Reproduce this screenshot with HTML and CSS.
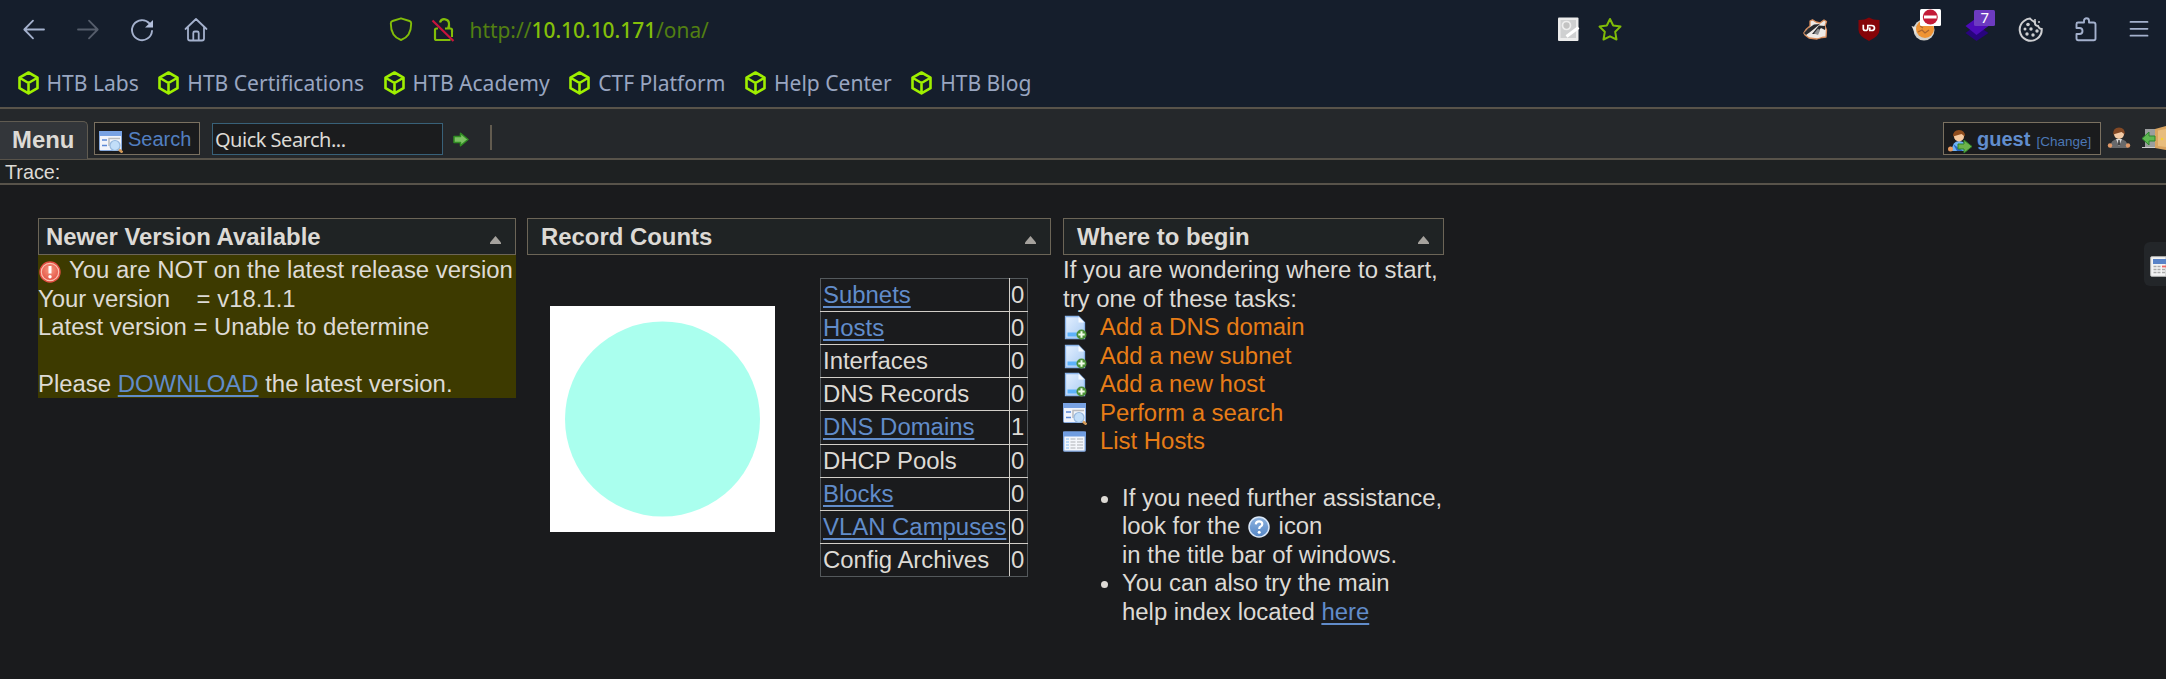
FILE: index.html
```html
<!DOCTYPE html>
<html lang="en">
<head>
<meta charset="utf-8">
<title>OpenNetAdmin</title>
<link rel="stylesheet" href="styles.css">
</head>
<body>
<svg class="defs" width="0" height="0">
  <defs>
    <linearGradient id="paper" x1="0" y1="0" x2="1" y2="1"><stop offset="0" stop-color="#e4f0ff"/><stop offset="1" stop-color="#a9cbf3"/></linearGradient>
    <radialGradient id="red" cx=".5" cy=".4" r=".6"><stop offset="0" stop-color="#f89a82"/><stop offset="1" stop-color="#e0483c"/></radialGradient>
    <linearGradient id="blue" x1="0" y1="0" x2="0" y2="1"><stop offset="0" stop-color="#8fb4e0"/><stop offset="1" stop-color="#5486c6"/></linearGradient>
    <symbol id="cube" viewBox="0 0 21 24"><path d="M10.5 1.5 19.5 6.6v10.6L10.5 22.4 1.5 17.2V6.6ZM2 7l8.500 5L19 7M10.500 12v10" fill="none" stroke="#9fef00" stroke-width="2.600" stroke-linejoin="round"/></symbol>
    <symbol id="search" viewBox="0 0 24 22"><rect x=".5" y=".5" width="22" height="19" rx="1" fill="#f1f4fb" stroke="#86a9de"/><path d="M0 0h23v5H0z" fill="#78a2e3"/><path d="M3 9h5M3 14.500h5" stroke="#5b88d6" stroke-width="1.600"/><path d="M10 15V7.500h11" stroke="#b9babd" stroke-width="1.500" fill="none"/><circle cx="16" cy="14.500" r="5" fill="#c2def9" stroke="#97b9df" stroke-width="1.200"/><path d="m20 18.500 3.500 3" stroke="#d49a58" stroke-width="2.600"/></symbol>
    <symbol id="page-add" viewBox="0 0 24 25"><path d="M2.500 1.500h13l6 6v16h-19z" fill="url(#paper)" stroke="#8bb5ea" stroke-width="1.300"/><path d="m15.500 1.500 6 6h-6z" fill="#f5faff"/><path d="M4.500 17.500h10v4h-10z" fill="#5db2fb"/><circle cx="18.500" cy="19.500" r="5" fill="#4c9138"/><path d="M18.500 16.300v6.400M15.300 19.500h6.400" stroke="#f0fbe8" stroke-width="2"/></symbol>
    <symbol id="list" viewBox="0 0 24 21"><rect x=".7" y=".7" width="21.500" height="19" rx="1" fill="#f4f7fc" stroke="#7ca3dc" stroke-width="1.300"/><path d="M0 0h23v5H0z" fill="#709de0"/><path d="M3 7.500h3M3 10.500h3M3 13.500h3M3 16.500h3" stroke="#83bdf4" stroke-width="1.200"/><path d="M7.500 7.500h5M14 7.500h6M7.500 10.500h5M14 10.500h6M7.500 13.500h5M14 13.500h6M7.500 16.500h5M14 16.500h6" stroke="#aeb2b6" stroke-width="1.200"/></symbol>
    <symbol id="up" viewBox="0 0 11 8"><path d="M5.500 0 11 6.500V8H0V6.500Z" fill="#a5a29d"/></symbol>
  </defs>
</svg>

<header class="browser">
  <nav class="address">
    <svg class="ico back" viewBox="0 0 24 24"><path d="M22 12.500H2.500M11 3.700 2.300 12.500l8.700 8.800" fill="none" stroke="#a4b1cd" stroke-width="1.800" stroke-linecap="round" stroke-linejoin="round"/></svg>
    <svg class="ico forward" viewBox="0 0 24 24"><path d="M2 12.500h19.500M13 3.700l8.700 8.800-8.700 8.800" fill="none" stroke="#555d6b" stroke-width="1.800" stroke-linecap="round" stroke-linejoin="round"/></svg>
    <svg class="ico reload" viewBox="0 0 24 24"><path d="M19.500 6.500A10 10 0 1 0 22 14" fill="none" stroke="#a4b1cd" stroke-width="1.900" stroke-linecap="round"/><path d="M23 3v7.500h-8Z" fill="#b3bfdb"/></svg>
    <svg class="ico home" viewBox="0 0 24 24"><path d="M1.500 12 12 2l10.500 10M4 10v11.500q0 2 2 2h12q2 0 2-2V10M9.300 23v-7q0-1.500 1.500-1.500h2.400q1.500 0 1.500 1.500v7" fill="none" stroke="#a4b1cd" stroke-width="1.800" stroke-linecap="round" stroke-linejoin="round"/></svg>
    <svg class="ico shield" viewBox="0 0 24 24"><path d="M12 1.300 20.500 4q1.700.6 1.700 2.400C22.200 14 19 20.500 12 23 5 20.500 1.800 14 1.800 6.400 1.800 4.600 2 4.500 3.500 4Z" fill="none" stroke="#82bd09" stroke-width="1.900" stroke-linejoin="round"/></svg>
    <svg class="ico lock" viewBox="0 0 24 24"><path d="M9 5.500a4.600 4.600 0 0 1 9 1.500V12M14 11.500h5.500q1.500 0 1.500 1.500v2M4 13v8.500Q4 23 5.500 23h14M4 13q0-1.500 1.500-1.500H7" fill="none" stroke="#82bd09" stroke-width="2.200"/><path d="m18 8-1 3.500M21 15v5" stroke="#82bd09" stroke-width="2"/><path d="M1.500 3.500 22.500 24" stroke="#c9143c" stroke-width="2.200"/></svg>
    <span class="url">http://<b>10.10.10.171</b>/ona/</span>
    <div class="page-actions">
      <svg class="ico" viewBox="0 0 24 24"><rect x="1" y=".5" width="20.500" height="23.500" rx="1" fill="#ececec"/><rect x="3.500" y="3" width="15.500" height="18" fill="#cfd0d1"/><circle cx="9.500" cy="8.500" r="4" fill="#c3c3c3" stroke="#eee" stroke-width="1.700"/><path d="M9.500 19.500 21.500 10.500" stroke="#fff" stroke-width="3"/></svg>
      <svg class="ico star" viewBox="0 0 24 24"><path d="m12 2 3.200 6.500 7.300 1.100-5.300 5.200 1.300 7.700L12 19.300l-6.500 3.200 1.300-7.700L1.500 9.600l7.300-1.100Z" fill="none" stroke="#80bb08" stroke-width="2" stroke-linejoin="round"/></svg>
    </div>
    <div class="extensions">
      <svg class="ico" viewBox="0 0 24 24"><path d="M.8 16 3 12.500 7 9V4l2.500-1.200L13 5l4 1 4-3 2.500 1.500L22 9l1.500 4-.5 7-4 .5-5 1.500-8-1-4-3Z" fill="#eeeae6" stroke="#d98d5b" stroke-width="1.300" stroke-linejoin="round"/><path d="m1 16 4-4.500 6-4 6-.5-6 5-4.500 3.500L3 18ZM9 17l7-8.500 6 .5v4l-4-2-5 6Z" fill="#282a2e"/><path d="m11 16.500 4-5 2 2-2 4.500Z" fill="#8f9092"/></svg>
      <svg class="ico" viewBox="0 0 24 24"><path d="M12 .5Q16 3 22.500 3v10q0 6-10.500 11Q1.500 19 1.500 13V3Q8 3 12 .5Z" fill="#850408"/><path d="M6.300 7.700v3.800q0 2 2.200 2t2.300-2V7.700M11 8.500h3.500q3 0 3 2.500t-3 2.500h-1.700v-3" stroke="#fff" stroke-width="1.700" fill="none"/></svg>
      <svg class="ico" viewBox="0 0 24 24"><circle cx="13" cy="13" r="10.500" fill="#d2d0cb"/><path d="m.5 9 7 2-3 6Z" fill="#e9e4db"/><circle cx="14" cy="12" r="9" fill="#ef9434"/><path d="m7 15 4-2 3 3 4-3M9 9l3 2" stroke="#ad6730" stroke-width="1.300" fill="none"/><rect x="9" y="-8" width="21" height="17" rx="1.500" fill="#fff"/><circle cx="19.300" cy="0" r="7.500" fill="#c31a37"/><path d="M13 0h12.600" stroke="#fff" stroke-width="3"/></svg>
      <svg class="ico" viewBox="0 0 24 24"><path d="m.5 16 11-8 12 8-12 8Z" fill="#28047d"/><path d="m.5 9 11-8 12 8-12 9Z" fill="#4d0bb8"/><rect x="9" y="-7" width="21" height="16" rx="1.500" fill="#6d3bc0"/><text x="15.500" y="6" font-family="Noto Sans, sans-serif" font-size="15" fill="#fff">7</text></svg>
      <svg class="ico" viewBox="0 0 24 24"><path d="M11 1.500Q8 1.500 5 4A11 11 0 1 0 22.700 12q-2.500 0-3.700-3-3.500-.5-3-4-3-1-5-3.500Z" fill="none" stroke="#cdced1" stroke-width="2"/><g fill="#cdced1"><circle cx="9" cy="7.500" r="1.800"/><circle cx="6" cy="12" r="1.500"/><circle cx="12" cy="12" r="1.700"/><circle cx="8" cy="17" r="1.700"/><circle cx="14" cy="18" r="1.700"/><circle cx="18" cy="14" r="1.700"/><circle cx="16" cy="3" r="1"/><circle cx="20" cy="5" r="1"/></g></svg>
      <svg class="ico" viewBox="0 0 24 24"><path d="M2.500 9V7q0-1.500 1.500-1.500h6V3.800a2.500 2.500 0 0 1 5 0v1.700h4.500q2 0 2 2v14q0 1.700-1.700 1.700H4.200q-1.700 0-1.700-1.700V17H5.500a3 3 0 0 0 0-6H2.500Z" fill="none" stroke="#a4b1cd" stroke-width="1.900" stroke-linejoin="round" transform="translate(1)"/></svg>
      <svg class="ico" viewBox="0 0 24 24"><path d="M3.500 4.900h17M3.500 11.800h17M3.500 18.700h17" stroke="#a4b1cd" stroke-width="1.800" stroke-linecap="round"/></svg>
    </div>
  </nav>
  <nav class="bookmarks">
    <span><svg><use href="#cube"/></svg>HTB Labs</span>
    <span><svg><use href="#cube"/></svg>HTB Certifications</span>
    <span><svg><use href="#cube"/></svg>HTB Academy</span>
    <span><svg><use href="#cube"/></svg>CTF Platform</span>
    <span><svg><use href="#cube"/></svg>Help Center</span>
    <span><svg><use href="#cube"/></svg>HTB Blog</span>
  </nav>
</header>

<div class="toolbar">
  <div class="menu">Menu</div>
  <div class="search"><svg class="search-ico"><use href="#search"/></svg>Search</div>
  <div class="quick">Quick Search...</div>
  <svg class="go" viewBox="0 0 16 15"><path d="M1 4.500h6.500V1.200L15 7.500l-7.500 6.300v-3.300H1Z" fill="#7cc063" stroke="#2f8c22" stroke-width="1.500" stroke-linejoin="round"/></svg>
  <i class="divider"></i>
  <div class="user">
    <svg class="user-ico" viewBox="0 0 24 23"><path d="M4 21q0-10 7-10 8 0 8 10Z" fill="#6eb2f4"/><path d="m5 14 4 7h6Z" fill="#2767c5"/><circle cx="2.500" cy="19" r="2.500" fill="#e79a60"/><circle cx="11" cy="6.500" r="5" fill="#f6c99f"/><path d="M5 6.500Q5 0 11 0t6 6.500L13.500 4Z" fill="#8f4c1d"/><path d="M10 14h6v-4l8 6.500-8 6.500v-4h-6Z" fill="#6db34b" stroke="#2c8428"/></svg>
    <b>guest</b><small>[Change]</small>
  </div>
  <svg class="suit" viewBox="0 0 22 22"><path d="M2 21q0-9 9-9t9 9Z" fill="#68696b"/><path d="m8 12 3 7 3-7Z" fill="#ddd"/><path d="M10.300 13h1.400l.5 5h-2.400Z" fill="#444"/><circle cx="2" cy="18.500" r="2.200" fill="#df9868"/><circle cx="20" cy="18.500" r="2.200" fill="#df9868"/><circle cx="11" cy="7" r="5" fill="#f4cba6"/><path d="M5 7.500Q5 .5 11 .5t6 7L13.500 5Z" fill="#824824"/></svg>
  <svg class="door" viewBox="0 0 24 24"><path d="M3 3h12v19H3Z" fill="#9b9e9e"/><path d="M0 21.500h15" stroke="#ccc"/><path d="m13 3 11-3v24l-11-2Z" fill="#d9a460"/><path d="M16 4.500 24 3v18l-8-1Z" fill="#e8bd7d"/><circle cx="20" cy="13" r="1.200" fill="#f7cf31"/><path d="M13 10H7V6L0 12.500 7 19v-4h6Z" fill="#5eb852" stroke="#2d872d"/></svg>
</div>
<div class="trace">Trace:</div>

<main class="desktop">
  <section class="widget version">
    <h2>Newer Version Available<svg><use href="#up"/></svg></h2>
    <div class="notice">
      <div><svg class="alert" viewBox="0 0 22 22"><circle cx="11" cy="11" r="10" fill="url(#red)" stroke="#e34d42" stroke-width="1.400"/><circle cx="11" cy="11" r="8.700" fill="none" stroke="#fbc0b0" stroke-width="1.200"/><path d="M11 5v7.500" stroke="#fff" stroke-width="3"/><circle cx="11" cy="15.800" r="1.700" fill="#fff"/></svg>You are NOT on the latest release version</div>
      <div>Your version &nbsp;&nbsp; = v18.1.1</div>
      <div>Latest version = Unable to determine</div>
      <div>&nbsp;</div>
      <div>Please <a>DOWNLOAD</a> the latest version.</div>
    </div>
  </section>

  <section class="widget counts">
    <h2>Record Counts<svg><use href="#up"/></svg></h2>
    <div class="counts-body">
      <svg class="pie" viewBox="0 0 225 226"><rect width="225" height="226" fill="#fff"/><circle cx="112.500" cy="113" r="97.500" fill="#aaffee"/></svg>
      <table>
        <tr><td><a>Subnets</a></td><td>0</td></tr>
        <tr><td><a>Hosts</a></td><td>0</td></tr>
        <tr><td>Interfaces</td><td>0</td></tr>
        <tr><td>DNS Records</td><td>0</td></tr>
        <tr><td><a>DNS Domains</a></td><td>1</td></tr>
        <tr><td>DHCP Pools</td><td>0</td></tr>
        <tr><td><a>Blocks</a></td><td>0</td></tr>
        <tr><td><a>VLAN Campuses</a></td><td>0</td></tr>
        <tr><td>Config Archives</td><td>0</td></tr>
      </table>
    </div>
  </section>

  <section class="widget begin">
    <h2>Where to begin<svg><use href="#up"/></svg></h2>
    <div>If you are wondering where to start,</div>
    <div>try one of these tasks:</div>
    <div class="task"><svg><use href="#page-add"/></svg>Add a DNS domain</div>
    <div class="task"><svg><use href="#page-add"/></svg>Add a new subnet</div>
    <div class="task"><svg><use href="#page-add"/></svg>Add a new host</div>
    <div class="task low"><svg><use href="#search"/></svg>Perform a search</div>
    <div class="task low"><svg><use href="#list"/></svg>List Hosts</div>
    <ul>
      <li>If you need further assistance,<br>look for the <svg class="help" viewBox="0 0 22 22"><circle cx="11" cy="11" r="10" fill="url(#blue)" stroke="#dbe8f8" stroke-width="1.500"/><path d="M7.800 8.300q.3-3 3.300-3t3.200 2.700q0 1.700-1.700 2.600-1.400.7-1.400 2.400" stroke="#fff" stroke-width="2.200" fill="none"/><circle cx="11.200" cy="16.200" r="1.500" fill="#fff"/></svg> icon<br>in the title bar of windows.</li>
      <li>You can also try the main<br>help index located <a>here</a></li>
    </ul>
  </section>

  <aside class="calc"><svg viewBox="0 0 16 21"><path d="M16 .7H1.500Q.7.700.7 1.500v18q0 .8.800.8H16Z" fill="#f4f4f4" stroke="#bcbcbc"/><path d="M3 3h13v5H3Z" fill="#5983c8"/><path d="M3.500 10.500h3M7.500 10.500h3M3.500 13.500h3M7.500 13.500h3M12 13.500h3M3.500 16.500h3M7.500 16.500h3M12 16.500h3" stroke="#aaa" stroke-width="1.600"/><path d="M12 10.500h4" stroke="#e66" stroke-width="1.800"/></svg></aside>
</main>
</body>
</html>
```

FILE: styles.css
```css
* { box-sizing: border-box; }
html, body { margin: 0; height: 100%; overflow: hidden; }
body {
  background: #1a1b1d;
  color: #dddad5;
  font: 23.92px/28.55px "Liberation Sans", Arial, sans-serif;
}
svg { display: block; flex: none; overflow: visible; }
.defs { position: absolute; }

.browser {
  height: 107px;
  background: #151e2c;
  font-family: "Noto Sans", sans-serif;
}
.address { display: flex; height: 58px; padding: 17px 0 0 22px; }
.ico { width: 24px; height: 24px; }
.forward { margin-left: 30px; }
.reload { margin-left: 30px; }
.home { margin-left: 29.5px; }
.shield { margin-left: 181.5px; }
.lock { margin-left: 17.5px; }
.url { width: 1087.5px; margin-left: 15px; color: #527f12; font-size: 20.9px; line-height: 26px; white-space: nowrap; }
.url b { color: #84c00a; font-weight: 500; }
.page-actions { display: flex; gap: 16.5px; width: 246px; }
.extensions { display: flex; gap: 30px; }
.bookmarks {
  display: flex;
  gap: 19.5px;
  padding-left: 17.5px;
  color: #99a6c1;
  font-size: 21.05px;
  line-height: 49px;
  white-space: nowrap;
}
.bookmarks span { display: flex; gap: 8px; }
.bookmarks svg { width: 21px; height: 24px; margin-top: 13px; }

.toolbar {
  display: flex;
  align-items: flex-start;
  height: 53px;
  border: solid #58534a;
  border-width: 2px 0;
  background: #25282b;
}
.menu {
  width: 88px;
  height: 38px;
  margin-top: 12px;
  padding-left: 12px;
  border: solid #605b51;
  border-width: 1px 1px 0 0;
  border-radius: 0 5px 0 0;
  background: #33363a;
  font-weight: bold;
  line-height: 36px;
}
.search, .user {
  display: flex;
  height: 33px;
  margin-top: 13px;
  border: 1px solid #7a7060;
  background: #1a1b1d;
  color: #527fc0;
}
.search { width: 106px; margin-left: 6px; padding-left: 4px; font-size: 20px; line-height: 33px; }
.search-ico { width: 24px; height: 22px; margin: 8px 5px 0 0; }
.quick {
  width: 231px;
  height: 32px;
  margin: 14px 0 0 12px;
  padding-left: 2px;
  border: 1px solid #386179;
  background: #1b1c1e;
  font: 20px/31px "Noto Sans", sans-serif;
  letter-spacing: -.5px;
}
.go { width: 16px; height: 15px; margin: 23px 0 0 10px; }
.divider { width: 2px; height: 25px; margin: 16px 0 0 21px; background: #625b4f; }
.user { width: 158px; margin-left: auto; padding-left: 4px; color: #618dcd; }
.user-ico { width: 24px; height: 23px; margin: 7px 5px 0 0; }
.user b { width: 59.5px; font-size: 20px; line-height: 32px; }
.user small { color: #4c77b5; font-size: 13.5px; line-height: 37px; }
.suit { width: 22px; height: 22px; margin: 18px 12px 0 7px; }
.door { width: 24px; height: 24px; margin-top: 17px; }
.trace {
  height: 25px;
  padding-left: 5px;
  border-bottom: 2px solid #58534a;
  background: #1e2122;
  font-size: 19.8px;
  line-height: 25px;
}

.desktop { display: flex; align-items: flex-start; padding: 33px 0 0 38px; }
.widget { flex: none; white-space: nowrap; }
.version { width: 478px; }
.counts { width: 524px; margin-left: 11px; }
.begin { width: 381px; margin-left: 12px; }
h2 {
  display: flex;
  justify-content: space-between;
  height: 37px;
  margin: 0 0 1px;
  padding: 0 14px 0 13px;
  border: 1px solid #6c6557;
  background: #1f2324;
  font-size: 23.92px;
  line-height: 35px;
}
.version h2 { margin: 0; padding-left: 7px; }
h2 svg { width: 11px; height: 8px; margin-top: 17px; }
.notice { height: 143px; padding-top: 1px; background: #3d3a00; }
.alert { display: inline-block; width: 22px; height: 22px; margin: 0 8px -5px 1px; vertical-align: baseline; }
.notice div { height: 28.55px; }
a { color: #618cca; }
.notice a, table a, li a { text-decoration: underline; text-decoration-thickness: 1.5px; text-underline-offset: 3px; }
.counts-body { display: flex; padding: 22px 0 0 23px; }
.pie { width: 225px; height: 226px; margin-top: 28px; }
table {
  width: 208px;
  height: 299px;
  margin-left: 45px;
  border: 1px solid #54595c;
  border-collapse: collapse;
}
td { height: 33px; padding: 0 2px; line-height: 30px; border: 1px solid #d2cec8; }
td:last-child { width: 18px; padding: 0 1px; }
tr:first-child td { border-top-color: #54595c; }
tr:last-child td { border-bottom-color: #54595c; }
td:first-child { border-left-color: #54595c; }
td:last-child { border-right-color: #54595c; }
.task { display: flex; height: 28.55px; color: #e77d17; }
.task svg { width: 24px; height: 25px; margin: 2px 13px 0 0; }
.task.low svg { height: 22px; margin-top: 4px; }
ul { margin: 28px 0 0; padding-left: 59px; }
.help { display: inline-block; width: 22px; height: 22px; margin: -4px 2px -4px 1px; vertical-align: baseline; }
.calc {
  width: 22px;
  height: 44px;
  margin: 24px 0 0 auto;
  padding: 14px 0 0 6px;
  border-radius: 6px 0 0 6px;
  background: #232629;
}
.calc svg { width: 16px; height: 21px; }
```
